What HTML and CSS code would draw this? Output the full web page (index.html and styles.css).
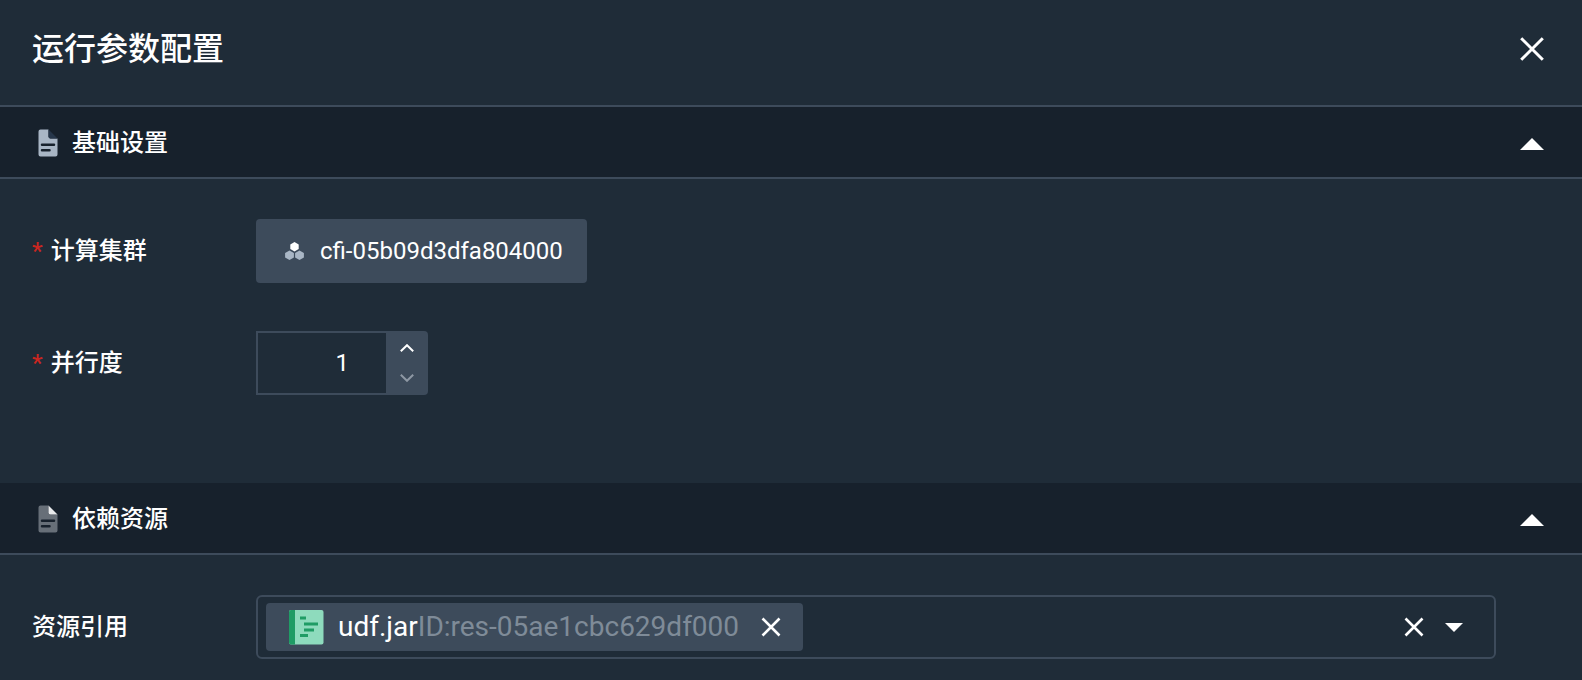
FILE: index.html
```
<!DOCTYPE html>
<html lang="zh-CN">
<head>
  <meta charset="utf-8">
  <meta name="viewport" content="width=device-width, initial-scale=1">
  <title>运行参数配置</title>
  <link rel="stylesheet" href="styles.css">
</head>
<body>
  <main class="panel">
    <header class="panel-header">
      <h1 class="panel-title">运行参数配置</h1>
      <button class="icon-button" type="button" aria-label="关闭">
        <svg width="24" height="24" viewBox="0 0 24 24"><path class="cross cross-large" d="M1.200 1.200 22.800 22.800M22.800 1.200 1.200 22.800"/></svg>
      </button>
    </header>

    <section>
      <div class="section-bar">
        <svg width="20" height="28" viewBox="0 0 20 28">
          <path class="file-body-light" fill-rule="evenodd" d="M2.500.5H10.500V7.500Q10.500 9.500 12.500 9.500H19.500V25.500Q19.500 27.500 17.500 27.500H2.500Q.5 27.500.5 25.500V2.500Q.5.500 2.500.500ZM4 14.500a1.250 1.250 0 0 0 0 2.500H16a1.250 1.250 0 0 0 0-2.500ZM4 20a1.250 1.250 0 0 0 0 2.500H11.500a1.250 1.250 0 0 0 0-2.500Z"/>
          <path class="file-fold-dark" d="M10.500.5 19.500 9.500H12.500Q10.500 9.500 10.500 7.500Z"/>
        </svg>
        <h2 class="section-title">基础设置</h2>
        <button class="icon-button" type="button" aria-label="收起基础设置">
          <svg width="24" height="12" viewBox="0 0 24 12"><path class="solid" d="M12 0 24 12H0Z"/></svg>
        </button>
      </div>
      <div class="section-body">
        <div class="field">
          <span class="field-label"><span class="required">*</span>计算集群</span>
          <button class="cluster" type="button">
            <svg width="20" height="18" viewBox="0 0 20 18">
              <path class="solid" d="M10.500 0 14.700 2.400V7.100L10.500 9.500 6.300 7.100V2.400Z"/>
              <path class="muted" d="M5.500 8.500 9.900 10.900V15.600L5.500 18 1.100 15.600V10.900ZM15.500 8.500 19.900 10.900V15.600L15.500 18 11.100 15.600V10.900Z"/>
            </svg>
            <span>cfi-05b09d3dfa804000</span>
          </button>
        </div>
        <div class="field">
          <label class="field-label" for="parallelism"><span class="required">*</span>并行度</label>
          <div class="stepper">
            <input class="stepper-input" id="parallelism" type="number" min="1" value="1">
            <div class="stepper-buttons">
              <button class="step" type="button" aria-label="增加">
                <svg width="14" height="8" viewBox="0 0 14 8"><path class="chevron" d="M.8 7.200 7 1.200 13.200 7.200"/></svg>
              </button>
              <button class="step step-off" type="button" aria-label="减少">
                <svg width="14" height="8" viewBox="0 0 14 8"><path class="chevron" d="M.8.8 7 6.800 13.200.8"/></svg>
              </button>
            </div>
          </div>
        </div>
      </div>
    </section>

    <section>
      <div class="section-bar">
        <svg width="20" height="28" viewBox="0 0 20 28">
          <path class="file-body-gray" fill-rule="evenodd" d="M2.500.5H10.500V7.500Q10.500 9.500 12.500 9.500H19.500V25.500Q19.500 27.500 17.500 27.500H2.500Q.5 27.500.5 25.500V2.500Q.5.500 2.500.500ZM4 14.500a1.250 1.250 0 0 0 0 2.500H16a1.250 1.250 0 0 0 0-2.500ZM4 20a1.250 1.250 0 0 0 0 2.500H11.500a1.250 1.250 0 0 0 0-2.500Z"/>
          <path class="file-fold-light" d="M10.500.5 19.500 9.500H12.500Q10.500 9.500 10.500 7.500Z"/>
        </svg>
        <h2 class="section-title">依赖资源</h2>
        <button class="icon-button" type="button" aria-label="收起依赖资源">
          <svg width="24" height="12" viewBox="0 0 24 12"><path class="solid" d="M12 0 24 12H0Z"/></svg>
        </button>
      </div>
      <div class="section-body section-body-last">
        <div class="field">
          <span class="field-label">资源引用</span>
          <div class="resource-select">
            <div class="tag">
              <svg width="36" height="36" viewBox="0 0 36 36">
                <rect class="book-page" x="1" y="1" width="34.500" height="34.500" rx="2"/>
                <path class="book-ink" d="M3 1H7V35.500H3Q1 35.500 1 33.500V3Q1 1 3 1ZM12 7.500H18V10.500H12ZM16 13.500H30V16.500H16ZM16 19.500H26V22.500H16ZM12 25H20V28H12Z"/>
              </svg>
              <span class="tag-text">udf.jar<span class="tag-id">ID:res-05ae1cbc629df000</span></span>
              <button class="icon-button" type="button" aria-label="移除 udf.jar">
                <svg width="20" height="20" viewBox="0 0 20 20"><path class="cross" d="M1.500 1.500 18.500 18.500M18.500 1.500 1.500 18.500"/></svg>
              </button>
            </div>
            <div class="select-actions">
              <button class="icon-button" type="button" aria-label="清空">
                <svg width="20" height="20" viewBox="0 0 20 20"><path class="cross" d="M1.500 1.500 18.500 18.500M18.500 1.500 1.500 18.500"/></svg>
              </button>
              <button class="icon-button" type="button" aria-label="展开选项">
                <svg width="18" height="9" viewBox="0 0 18 9"><path class="solid" d="M0 0H18L9 9Z"/></svg>
              </button>
            </div>
          </div>
        </div>
      </div>
    </section>
  </main>
</body>
</html>
```
FILE: styles.css
```
* {
  box-sizing: border-box;
}

body {
  margin: 0;
  background: #1f2c38;
  color: #fff;
  font-family: Roboto, "Noto Sans CJK SC", sans-serif;
  font-size: 24px;
  line-height: 36px;
}

svg {
  display: block;
  flex: none;
}

button,
input {
  border: 0;
  padding: 0;
  background: none;
  color: inherit;
  font: inherit;
}

button {
  cursor: pointer;
}

.cross {
  fill: none;
  stroke: #fff;
  stroke-width: 2.6;
}

.cross-large {
  stroke-width: 3;
}

.solid {
  fill: #fff;
}

.muted {
  fill: #a9b6c5;
}

.chevron {
  fill: none;
  stroke: currentColor;
  stroke-width: 2;
}

.panel-header {
  display: flex;
  align-items: center;
  justify-content: space-between;
  padding: 25px 38px 32px 32px;
  border-bottom: 2px solid #3d4b5b;
}

.panel-title {
  margin: 0;
  font-size: 32px;
  font-weight: 500;
  line-height: 48px;
}

.section-bar {
  display: flex;
  align-items: center;
  height: 72px;
  padding: 2px 38px 0;
  border-bottom: 2px solid #3d4b5b;
  background: #17212c;
}

.section-bar .icon-button {
  padding-top: 2px;
}

.section-title {
  flex: 1;
  margin: 0 0 0 14px;
  font-size: 24px;
  font-weight: 500;
}

.file-body-light {
  fill: #a9b6c5;
}

.file-fold-dark {
  fill: #26364a;
}

.file-body-gray {
  fill: #676f78;
}

.file-fold-light {
  fill: #e8eaec;
}

.section-body {
  display: flex;
  flex-direction: column;
  gap: 48px;
  padding: 40px 86px 88px 32px;
}

.section-body-last {
  padding-bottom: 20px;
}

.field {
  display: flex;
  align-items: center;
}

.field-label {
  display: flex;
  flex: none;
  gap: 8px;
  width: 224px;
  font-weight: 500;
}

.required {
  color: #ca2621;
}

.cluster {
  display: flex;
  align-items: center;
  gap: 16px;
  height: 64px;
  padding: 0 24px 0 28px;
  border-radius: 4px;
  background: #3d4b5b;
}

.stepper {
  display: flex;
  height: 64px;
}

.stepper-input {
  width: 130px;
  padding-right: 37px;
  border: 2px solid #3d4b5b;
  border-right: 0;
  text-align: right;
  appearance: textfield;
}

.stepper-input::-webkit-inner-spin-button {
  appearance: none;
  margin: 0;
}

.stepper-buttons {
  display: flex;
  flex-direction: column;
  width: 42px;
  padding: 2px 0;
  border-radius: 0 4px 4px 0;
  background: #3d4b5b;
}

.step {
  display: flex;
  flex: 1;
  align-items: center;
  justify-content: center;
}

.step-off {
  color: #8e98a4;
}

.resource-select {
  display: flex;
  flex: 1;
  align-items: center;
  justify-content: space-between;
  height: 64px;
  padding: 0 31px 0 8px;
  border: 2px solid #3d4b5b;
  border-radius: 6px;
}

.tag {
  display: flex;
  align-items: center;
  height: 48px;
  padding: 0 22px;
  border-radius: 4px;
  background: #3d4b5b;
}

.tag-text {
  margin: 0 22px 0 14px;
  font-size: 28px;
}

.tag-id {
  color: #7f8b98;
}

.book-page {
  fill: #8edbbd;
}

.book-ink {
  fill: #1f9c65;
}

.select-actions {
  display: flex;
  align-items: center;
  gap: 21px;
}
```
